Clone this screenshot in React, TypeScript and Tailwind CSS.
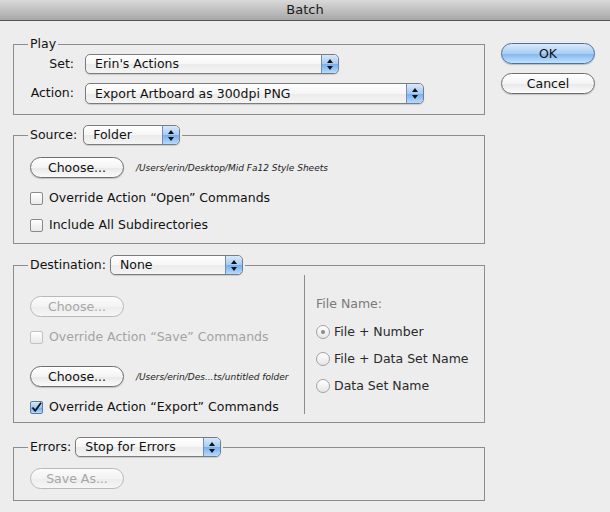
import React from "react";

const font = { fontFamily: '"DejaVu Sans", "Liberation Sans", sans-serif' };

function Stepper() {
  return (
    <span className="flex h-full w-[17px] shrink-0 flex-col items-center justify-center gap-[3px] rounded-r-[4px] border-l border-[#6f8fb8] bg-[linear-gradient(to_bottom,#d7e8fb,#a6cbf3_50%,#74afef_51%,#b9dafb)]">
      <svg width="6" height="4" viewBox="0 0 6 4">
        <path d="M0 4 L3 0 L6 4 Z" fill="#111" />
      </svg>
      <svg width="6" height="4" viewBox="0 0 6 4">
        <path d="M0 0 L6 0 L3 4 Z" fill="#111" />
      </svg>
    </span>
  );
}

function Select({ value, width, height = 20 }: { value: string; width: number; height?: number }) {
  return (
    <span
      className="flex items-center overflow-hidden rounded-[5px] border border-[#7c7c7c] bg-[linear-gradient(to_bottom,#ffffff,#f6f6f6_50%,#ebebeb_51%,#f4f4f4)] shadow-[0_1px_1px_rgba(0,0,0,0.15)]"
      style={{ width, height }}
    >
      <span className="flex-1 whitespace-nowrap pl-[9px] text-[12.5px] leading-[16px] text-[#111]">{value}</span>
      <Stepper />
    </span>
  );
}

function Button({ label, disabled, primary }: { label: string; disabled?: boolean; primary?: boolean }) {
  const base = "flex h-[21px] w-[94px] shrink-0 items-center justify-center rounded-full border text-[12.5px] leading-[16px]";
  if (primary)
    return (
      <div className={`${base} border-[#4d70a0] bg-[linear-gradient(to_bottom,#d9eafc,#a9cdf5_50%,#7fb5ef_51%,#c4e2fc)] text-[#111] shadow-[0_1px_1px_rgba(0,0,0,0.2)]`}>
        {label}
      </div>
    );
  return (
    <div
      className={`${base} ${
        disabled
          ? "border-[#b9b9b9] bg-[linear-gradient(to_bottom,#fbfbfb,#f3f3f3_50%,#ececec_51%,#f6f6f6)] text-[#a6a6a6]"
          : "border-[#6e6e6e] bg-[linear-gradient(to_bottom,#ffffff,#f4f4f4_50%,#e8e8e8_51%,#fbfbfb)] text-[#111] shadow-[0_1px_1px_rgba(0,0,0,0.18)]"
      }`}
    >
      {label}
    </div>
  );
}

function Checkbox({ label, checked, disabled }: { label: string; checked?: boolean; disabled?: boolean }) {
  return (
    <div className="flex h-[16px] items-center gap-[6px] whitespace-nowrap">
      {checked ? (
        <span className="flex h-[13px] w-[13px] items-center justify-center rounded-[2px] border border-[#5a7aa6] bg-[linear-gradient(to_bottom,#d5e7fb,#9cc6f3_50%,#6eaaee_51%,#b8dafb)]">
          <svg width="11" height="11" viewBox="0 0 11 11">
            <path d="M1.5 5.5 L4.3 8.8 L10 0.8" fill="none" stroke="#111" strokeWidth="1.8" strokeLinejoin="round" />
          </svg>
        </span>
      ) : (
        <span
          className={`h-[13px] w-[13px] rounded-[2px] border bg-[linear-gradient(to_bottom,#ffffff,#e9e9e9)] ${
            disabled ? "border-[#c2c2c2]" : "border-[#8a8a8a]"
          }`}
        />
      )}
      <span className={`text-[12.5px] leading-[16px] ${disabled ? "text-[#a3a3a3]" : "text-[#111]"}`}>{label}</span>
    </div>
  );
}

function Radio({ label, selected }: { label: string; selected?: boolean }) {
  return (
    <div className="flex h-[16px] items-center gap-[4px] whitespace-nowrap">
      <span className="flex h-[14px] w-[14px] items-center justify-center rounded-full border border-[#a2a2a2] bg-[linear-gradient(to_bottom,#ffffff,#e6e6e6)]">
        {selected && <span className="h-[4px] w-[4px] rounded-full bg-[#8a8a8a]" />}
      </span>
      <span className="text-[12.5px] leading-[16px] text-[#2a2a2a]">{label}</span>
    </div>
  );
}

function Path({ children }: { children: React.ReactNode }) {
  return <span className="ml-[12px] whitespace-nowrap text-[9px] italic leading-[12px] text-[#222]">{children}</span>;
}

const fieldset = "min-w-0 border border-[#8d8d8d] px-[16px]";
const legend = "-ml-[2px] flex items-center px-[2px]";

export default function App() {
  return (
    <div className="h-[512px] w-[610px] overflow-hidden bg-[#ededed]" style={font}>
      <div className="flex h-[21px] items-center justify-center border-b border-[#555] bg-[linear-gradient(to_bottom,#d9d9d9,#a8a8a8)] text-[13px] text-[#1a1a1a]">
        Batch
      </div>

      <div className="flex pl-[13px] pt-[15px]">
        <div className="flex w-[472px] shrink-0 flex-col">
          {/* Play */}
          <fieldset className={`${fieldset} pb-[10px]`}>
            <legend className={`${legend} h-[16px] text-[12.5px] text-[#111]`}>Play</legend>
            <div className="mt-[2px] grid grid-cols-[44px_1fr] items-center gap-x-[11px] gap-y-[9px] text-[12.5px] text-[#111]">
              <span className="text-right">Set:</span>
              <Select value="Erin's Actions" width={254} />
              <span className="text-right">Action:</span>
              <Select value="Export Artboard as 300dpi PNG" width={339} height={21} />
            </div>
          </fieldset>

          {/* Source */}
          <fieldset className={`${fieldset} mt-[10px] pb-[10px]`}>
            <legend className={`${legend} gap-[6px] text-[12.5px] text-[#111]`}>
              <span>Source:</span>
              <Select value="Folder" width={97} />
            </legend>
            <div className="mt-[12px] flex items-center">
              <Button label="Choose..." />
              <Path>/Users/erin/Desktop/Mid Fa12 Style Sheets</Path>
            </div>
            <div className="mt-[12px] flex flex-col gap-[11px]">
              <Checkbox label={"Override Action \u201COpen\u201D Commands"} />
              <Checkbox label="Include All Subdirectories" />
            </div>
          </fieldset>

          {/* Destination */}
          <fieldset className={`${fieldset} mt-[11px] pb-[7px]`}>
            <legend className={`${legend} gap-[4px] text-[12.5px] text-[#111]`}>
              <span>Destination:</span>
              <Select value="None" width={133} />
            </legend>
            <div className="flex">
              <div className="flex w-[274px] shrink-0 flex-col pt-[21px]">
                <Button label="Choose..." disabled />
                <div className="mt-[12px]">
                  <Checkbox label={"Override Action \u201CSave\u201D Commands"} disabled />
                </div>
                <div className="mt-[21px] flex items-center">
                  <Button label="Choose..." />
                  <Path>/Users/erin/Des...ts/untitled folder</Path>
                </div>
                <div className="mt-[12px]">
                  <Checkbox label={"Override Action \u201CExport\u201D Commands"} checked />
                </div>
              </div>
              <div className="flex h-[139px] flex-1 flex-col border-l border-[#8d8d8d] pl-[11px] pt-[21px]">
                <span className="h-[16px] whitespace-nowrap text-[12.5px] leading-[16px] text-[#7a7a7a]">File Name:</span>
                <div className="mt-[12px] flex flex-col gap-[11px]">
                  <Radio label="File + Number" selected />
                  <Radio label="File + Data Set Name" />
                  <Radio label="Data Set Name" />
                </div>
              </div>
            </div>
          </fieldset>

          {/* Errors */}
          <fieldset className={`${fieldset} mt-[14px] pb-[11px]`}>
            <legend className={`${legend} gap-[4px] text-[12.5px] text-[#111]`}>
              <span>Errors:</span>
              <Select value="Stop for Errors" width={146} />
            </legend>
            <div className="mt-[11px]">
              <Button label="Save As..." disabled />
            </div>
          </fieldset>
        </div>

        <div className="ml-[16px] flex flex-col gap-[9px] pt-[7px]">
          <Button label="OK" primary />
          <Button label="Cancel" />
        </div>
      </div>
    </div>
  );
}
